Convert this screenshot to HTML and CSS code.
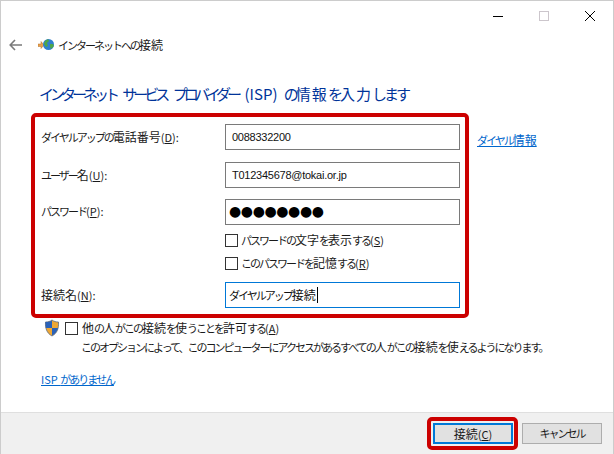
FILE: index.html
```html
<!DOCTYPE html>
<html lang="ja">
<head>
  <meta charset="UTF-8" />
  <title>インターネットへの接続</title>
  <link rel="stylesheet" href="styles.css">
</head>
<body>
  <div class="window">
    <div class="titlebar">
      <svg class="ctl" width="12" height="12" viewBox="0 0 12 12"><path d="M1 6.500h10" stroke="#000" fill="none"/></svg>
      <svg class="ctl" width="12" height="12" viewBox="0 0 12 12"><rect x="1.500" y="1.500" width="9" height="9" stroke="#ccc6cc" fill="none"/></svg>
      <svg class="ctl" width="12" height="12" viewBox="0 0 12 12"><path d="M1 1l10 10M11 1L1 11" stroke="#000" fill="none"/></svg>
    </div>

    <div class="navrow">
      <svg class="back" width="13" height="12" viewBox="0 0 13 12"><path d="M6 1L1.200 6 6 11M1.500 6H13" stroke="#7a7a7a" stroke-width="1.600" fill="none"/></svg>
      <svg class="globe" width="17" height="14" viewBox="0 0 17 14">
        <path d="M0 6h3V3.500l3 3.500-3 3.500V8.500H0z" fill="#e8a04c" stroke="#b0702c" stroke-width=".5"/>
        <circle cx="10.500" cy="6.500" r="5.500" fill="#2f7fd0"/>
        <path d="M7 3l3-2 1 2-2 2 1 3-2 1-2-3zM12 6l3 0 1 2-3 3-1-2z" fill="#4ea64a"/>
      </svg>
      <span class="raised">インターネットへの<span class="kj">接続</span></span>
    </div>

    <h1 class="heading">インターネット サービス プロバイダー <span class="lt">(ISP)</span> <span class="hg">の</span><span class="kj">情報</span><span class="hg">を</span><span class="kj">入力</span><span class="hg">します</span></h1>

    <div class="formrow">
      <div class="redbox">
        <div class="field">
          <label class="raised">ダイヤルアップの<span class="kj">電話番号</span><span class="lt">(<u>D</u>):</span></label>
          <div class="input lt">0088332200</div>
        </div>
        <div class="field short-gap">
          <label class="raised">ユーザー<span class="kj">名</span><span class="lt">(<u>U</u>):</span></label>
          <div class="input lt">T012345678@tokai.or.jp</div>
        </div>
        <div class="field">
          <label class="raised">パスワード<span class="lt">(<u>P</u>):</span></label>
          <div class="input dots">●●●●●●●●</div>
        </div>
        <div class="check first"><span class="box"></span><span class="raised">パスワードの<span class="kj">文字</span>を<span class="kj">表示</span>する<span class="lt">(<u>S</u>)</span></span></div>
        <div class="check"><span class="box"></span><span class="raised">このパスワードを<span class="kj">記憶</span>する<span class="lt">(<u>R</u>)</span></span></div>
        <div class="field last">
          <label class="raised"><span class="kj">接続名</span><span class="lt">(<u>N</u>):</span></label>
          <div class="input focus"><span class="caret">ダイヤルアップ<span class="kj">接続</span></span></div>
        </div>
      </div>
      <a class="link dial" href="#">ダイヤル<span class="kj">情報</span></a>
    </div>

    <div class="share">
      <svg class="shield" width="16" height="18" viewBox="0 0 16 18">
        <path d="M8 1c2 1.500 4 2 6.500 2 .3 6-1 11-6.500 14C2.500 14 1.200 9 1.500 3 4 3 6 2.500 8 1z" fill="#f0a834" stroke="#5a6a80" stroke-width=".8"/>
        <path d="M8 1.500V9H1.800c-.2-2-.3-4-.3-6C4 3 6 2.500 8 1.500zM8 9h6c-.8 3.300-2.700 6-6 7.500z" fill="#2b62b8"/>
      </svg>
      <span class="box"></span>
      <span class="share-text raised"><span class="kj">他</span>の<span class="kj">人</span>がこの<span class="kj">接続</span>を<span class="kj">使</span>うことを<span class="kj">許可</span>する<span class="lt">(<u>A</u>)</span></span>
    </div>
    <p class="note">このオプションによって、このコンピューターにアクセスがあるすべての<span class="kj">人</span>がこの<span class="kj">接続</span>を<span class="kj">使</span>えるようになります。</p>

    <a class="link noisp" href="#"><span class="lt">ISP </span>がありません</a>

    <div class="footer">
      <div class="redbtn"><button class="btn primary"><span class="kj">接続</span><span class="lt">(<u>C</u>)</span></button></div>
      <button class="btn">キャンセル</button>
    </div>
  </div>
</body>
</html>
```

FILE: styles.css
```css
* {
  box-sizing: border-box;
}

html, body {
  margin: 0;
  padding: 0;
  background: white;
}

/* kana run narrow in the original UI font, kanji and latin do not */
body {
  font-family: "Noto Sans CJK JP", "Noto Sans", sans-serif;
  font-size: 11px;
  letter-spacing: -2px;
  color: #1a1a1a;
}

.kj {
  font-size: 12px;
  letter-spacing: 0;
}

.lt {
  letter-spacing: 0;
}

/* CJK font sits a pixel low in a centred row */
.raised {
  padding-bottom: 2px;
}

.window {
  width: 614px;
  height: 454px;
  border: 1px solid #ccc;
  border-bottom: none;
  display: flex;
  flex-direction: column;
}

.titlebar {
  height: 29px;
  display: flex;
  justify-content: flex-end;
  align-items: center;
  padding-right: 17px;
  gap: 34px;
}

.navrow {
  height: 30px;
  display: flex;
  align-items: center;
  padding-left: 8px;
}

.back {
  margin-right: 16px;
}

.globe {
  margin-right: 3px;
}

.heading {
  font-size: 15px;
  font-weight: normal;
  color: #003399;
  margin: 23px 0 0 38px;
  line-height: 22px;
  height: 22px;
  letter-spacing: -4px;
  word-spacing: 7px;
  white-space: nowrap;
}

.heading .kj {
  font-size: 15px;
  letter-spacing: 1px;
}

.heading .hg {
  letter-spacing: -3px;
}

.formrow {
  display: flex;
  margin: 8px 0 0 30px;
}

/* red callout round the form */
.redbox {
  width: 438px;
  height: 205px;
  border: 4px solid #cc0000;
  border-radius: 5px;
  padding: 7px 5px 0 6px;
}

.field {
  display: flex;
  align-items: center;
  height: 26px;
  margin-bottom: 12px;
}

.field.short-gap {
  margin-bottom: 11px;
}

.field label {
  width: 184px;
  flex: none;
}

.input {
  width: 235px;
  height: 26px;
  border: 1px solid #7a7a7a;
  padding-left: 6px;
  line-height: 23px;
  color: #111;
}

.input.lt {
  font-family: "Liberation Sans", sans-serif;
  letter-spacing: -0.25px;
  line-height: 24px;
}

.dots {
  font-size: 14px;
  letter-spacing: -0.4px;
  padding-left: 3px;
  color: #000;
  font-family: "DejaVu Sans", sans-serif;
}

.focus {
  border-color: #0078d7;
  padding-left: 3px;
}

.caret {
  border-right: 1px solid #000;
  padding-right: 1px;
}

.check {
  display: flex;
  align-items: center;
  height: 13px;
  margin-left: 184px;
  margin-bottom: 10px;
  white-space: nowrap;
}

.check.first {
  margin-top: -3px;
}

.box {
  width: 13px;
  height: 13px;
  border: 1px solid #333;
  background: white;
  margin-right: 3px;
  flex: none;
}

.field.last {
  margin-top: 12px;
  margin-bottom: 0;
}

.link {
  color: #0066cc;
  text-decoration: underline;
}

.dial {
  margin: 18px 0 0 8px;
}

.share {
  display: flex;
  align-items: center;
  height: 20px;
  margin: 0 0 0 43px;
}

.shield {
  margin-right: 5px;
}

.share-text {
  margin-left: 1px;
}

.note {
  margin: 0 0 0 80px;
  line-height: 18px;
  white-space: nowrap;
}

.noisp {
  margin: 14px 0 0 40px;
  align-self: flex-start;
  line-height: 18px;
}

.footer {
  margin-top: auto;
  height: 42px;
  background: #f0f0f0;
  border-top: 1px solid #dfdfdf;
  display: flex;
  justify-content: flex-end;
  align-items: center;
  padding: 0 11px 1px 0;
  gap: 4px;
}

.redbtn {
  border: 4px solid #cc0000;
  border-radius: 5px;
  padding: 2px 1px 2px 2px;
  display: flex;
}

.btn {
  width: 80px;
  height: 21px;
  padding: 0;
  border: 1px solid #adadad;
  background: #e1e1e1;
  font-family: inherit;
  font-size: 11px;
  letter-spacing: -2px;
  color: #1a1a1a;
  line-height: 17px;
}

.primary {
  border: 2px solid #0078d7;
}
```
